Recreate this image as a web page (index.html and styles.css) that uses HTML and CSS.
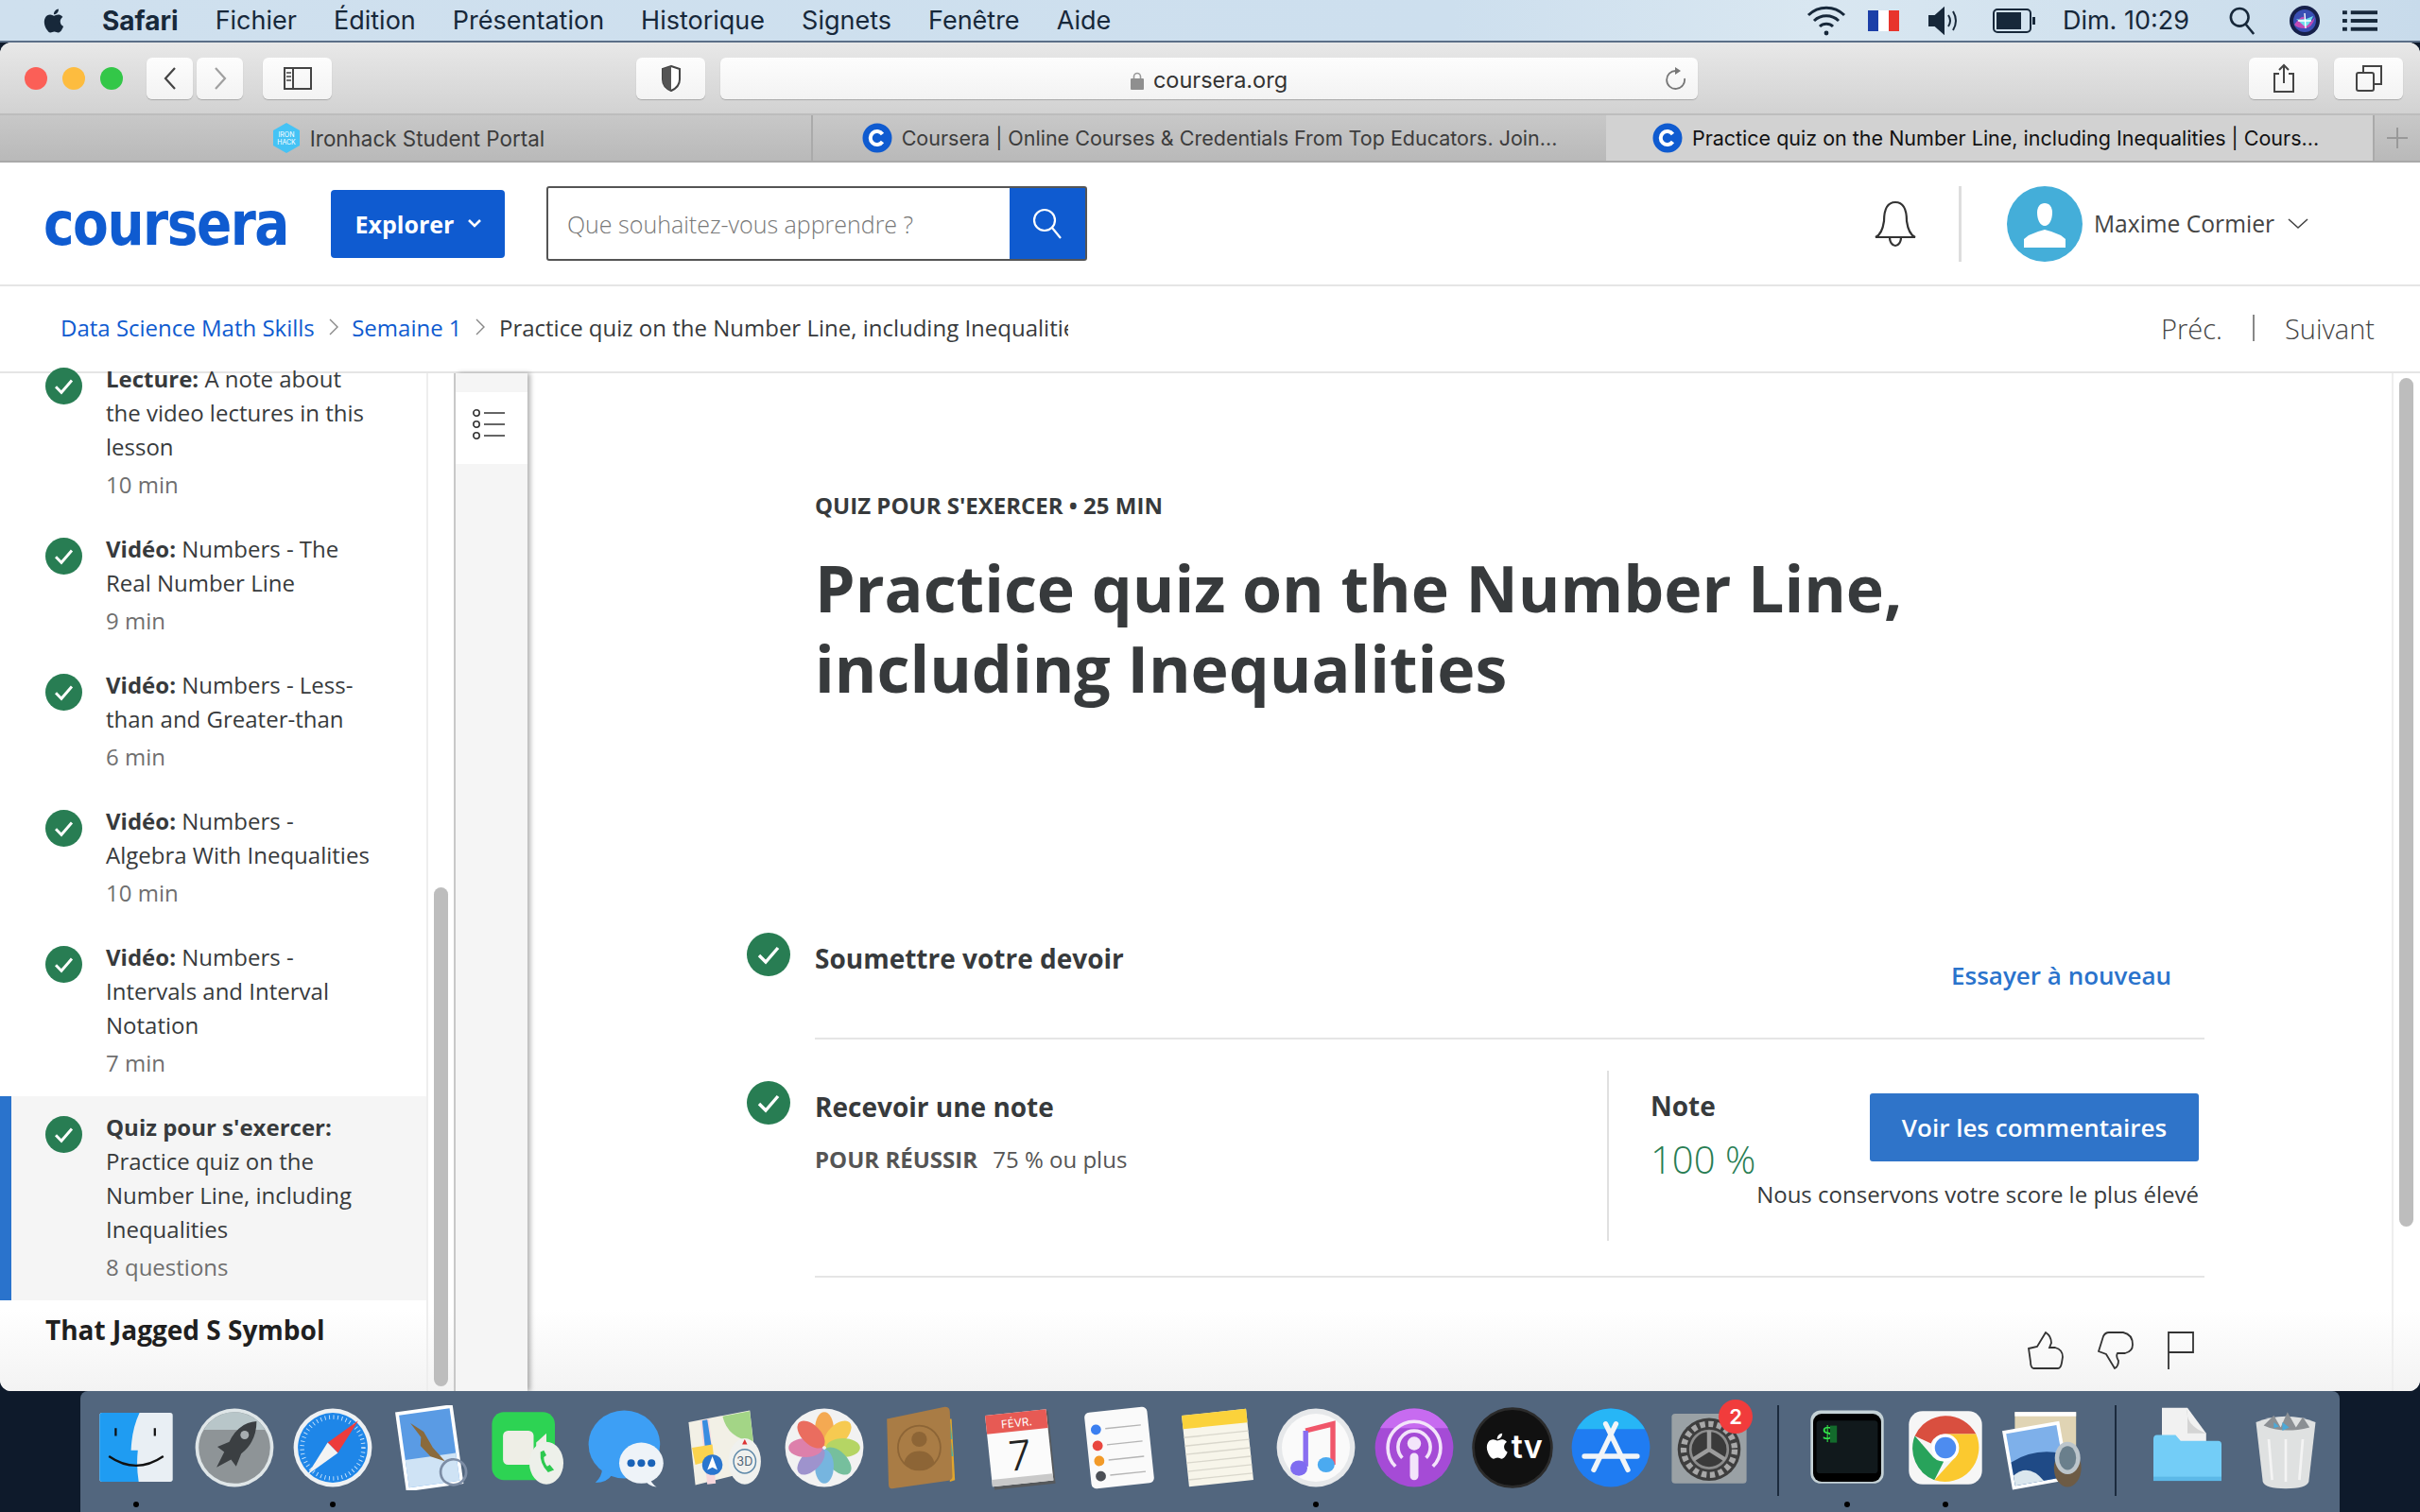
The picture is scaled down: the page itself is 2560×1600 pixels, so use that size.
FILE: index.html
```html
<!DOCTYPE html>
<html lang="fr">
<head>
    <meta charset="UTF-8">
    <meta name="viewport" content="width=device-width, initial-scale=1.0">
    <title>Practice quiz on the Number Line, including Inequalities | Coursera</title>
    <link rel="stylesheet" href="styles.css">
</head>
<body>
    <svg class="defs" width="0" height="0">
        <symbol id="apple" viewBox="0 0 24 24"><path d="M18.71 19.5c-.83 1.24-1.71 2.45-3.05 2.47-1.34.03-1.77-.79-3.29-.79-1.53 0-2 .77-3.27.82-1.31.05-2.3-1.32-3.14-2.53C4.25 17 2.94 12.45 4.7 9.39c.87-1.52 2.43-2.48 4.12-2.51 1.28-.02 2.5.87 3.29.87.78 0 2.26-1.07 3.8-.91.65.03 2.47.26 3.64 1.98-.09.06-2.17 1.28-2.15 3.81.03 3.02 2.65 4.03 2.68 4.04-.03.07-.42 1.44-1.38 2.83M13 3.5c.73-.83 1.94-1.46 2.94-1.5.13 1.17-.34 2.35-1.04 3.19-.69.85-1.83 1.51-2.95 1.42-.15-1.15.41-2.35 1.05-3.11z"/></symbol>
        <symbol id="check" viewBox="0 0 46 46"><circle cx="23" cy="23" r="23" fill="#287d53"/><path d="M13 24l7 7 13-15" fill="none" stroke="#fff" stroke-width="3.4"/></symbol>
        <symbol id="fav-c" viewBox="0 0 32 32"><circle cx="16" cy="16" r="15.5" fill="#0f5bd0"/><path d="M21.5 12a7 7 0 1 0 0 8" fill="none" stroke="#fff" stroke-width="4"/></symbol>
    </svg>

    <div class="menubar">
        <svg class="apple-logo" width="30" height="34"><use href="#apple"/></svg>
        <span class="menu-item menu-app">Safari</span>
        <span class="menu-item">Fichier</span>
        <span class="menu-item">Édition</span>
        <span class="menu-item">Présentation</span>
        <span class="menu-item">Historique</span>
        <span class="menu-item">Signets</span>
        <span class="menu-item">Fenêtre</span>
        <span class="menu-item">Aide</span>
        <div class="status">
            <svg width="42" height="36" viewBox="0 0 42 36" fill="none" stroke="#17283a" stroke-width="3"><path d="M2 12a27 27 0 0 1 38 0"/><path d="M8 18a19 19 0 0 1 26 0"/><path d="M14 24a10 10 0 0 1 14 0"/><circle cx="21" cy="31" r="2.4" fill="#17283a" stroke="none"/></svg>
            <div class="flag st-flag"><i class="flag-b"></i><i class="flag-w"></i><i class="flag-r"></i></div>
            <svg class="st-sound" width="36" height="30" viewBox="0 0 36 30" fill="none" stroke="#17283a" stroke-width="2"><path d="M1 10h6l9-8v26l-9-8H1z" fill="#17283a"/><path d="M21 9q4 6 0 12"/><path d="M26 5q6 10 0 20"/></svg>
            <svg class="st-battery" width="46" height="26" viewBox="0 0 46 26"><rect x="1" y="1" width="39" height="24" rx="4" fill="none" stroke="#17283a" stroke-width="2"/><rect x="4" y="4" width="26" height="18" fill="#17283a"/><rect x="42" y="9" width="3" height="8" fill="#17283a"/></svg>
            <span class="st-clock">Dim. 10:29</span>
            <svg class="st-search" width="28" height="32" viewBox="0 0 30 32" fill="none" stroke="#17283a" stroke-width="2.8"><circle cx="12" cy="12" r="10"/><path d="M19 20l9 11"/></svg>
            <svg class="st-siri" width="32" height="32" viewBox="0 0 32 32"><circle cx="16" cy="16" r="16" fill="#16204a"/><circle cx="16" cy="16" r="12" fill="#3a4fb5"/><path d="M5 20q11-14 11-4t11-4q-3 12-11 12T5 20" fill="#c14ab5"/><path d="M7 14q9 2 18-3-5 12-9 11" fill="#6fe0ee"/><path d="M16 8l1 16M9 16h14" stroke="#fff" stroke-width="1.4"/></svg>
            <svg class="st-list" width="37" height="22" viewBox="0 0 38 22" fill="#17283a"><rect width="5" height="4"/><rect x="9" width="29" height="4"/><rect y="9" width="5" height="4"/><rect x="9" y="9" width="29" height="4"/><rect y="18" width="5" height="4"/><rect x="9" y="18" width="29" height="4"/></svg>
        </div>
    </div>

    <div class="window">
        <div class="toolbar">
            <div class="lights"><i class="light light-r"></i><i class="light light-y"></i><i class="light light-g"></i></div>
            <div class="nav-pair">
                <div class="tool-btn tool-nav"><svg width="14" height="24" viewBox="0 0 14 24" fill="none" stroke="#444" stroke-width="2.2"><path d="M12 1L2 12l10 11"/></svg></div>
                <div class="tool-btn tool-nav"><svg width="14" height="24" viewBox="0 0 14 24" fill="none" stroke="#a0a0a0" stroke-width="2.2"><path d="M2 1l10 11L2 23"/></svg></div>
            </div>
            <div class="tool-btn tool-wide tool-side"><svg width="30" height="24" viewBox="0 0 30 24" fill="none" stroke="#444" stroke-width="2"><rect x="1" y="1" width="28" height="22"/><path d="M10 1v22"/><path d="M3 6h5M3 10h5M3 14h5" stroke-width="1.4"/></svg></div>
            <div class="tool-btn tool-wide tool-shield"><svg width="20" height="28" viewBox="0 0 20 28"><path d="M10 1l9 3v11q0 8-9 12Q1 23 1 15V4z" fill="#fff" stroke="#444" stroke-width="2"/><path d="M10 1L1 4v11q0 8 9 12z" fill="#555"/></svg></div>
            <div class="address">
                <div class="address-text">
                    <svg width="14" height="20" viewBox="0 0 14 20"><path d="M3.5 9V6a3.5 3.5 0 0 1 7 0v3" fill="none" stroke="#999" stroke-width="1.6"/><rect y="8" width="14" height="12" rx="1" fill="#8f8f8f"/></svg>
                    <span>coursera.org</span>
                </div>
                <svg class="reload" width="24" height="26" viewBox="0 0 24 26" fill="none" stroke="#777" stroke-width="1.8"><path d="M13 5a9.5 9.5 0 1 0 9 8"/><path d="M12 1l6 4-6 4z" fill="#777" stroke="none"/></svg>
            </div>
            <div class="tool-btn tool-wide tool-share"><svg width="24" height="32" viewBox="0 0 24 32" fill="none" stroke="#444" stroke-width="2"><path d="M7 11H2v19h20V11h-5"/><path d="M12 21V2M7 7l5-5 5 5"/></svg></div>
            <div class="tool-btn tool-wide"><svg width="28" height="28" viewBox="0 0 28 28" fill="none" stroke="#444" stroke-width="2"><rect x="1" y="8" width="18" height="19" rx="2"/><path d="M8 8V1h19v19h-8"/></svg></div>
        </div>

        <div class="tabbar">
            <div class="tab tab-one">
                <svg width="30" height="32" viewBox="0 0 30 32"><path d="M15 0l14 8v16l-14 8-14-8V8z" fill="#45c3f5"/><text x="15" y="15" class="fav-text">IRON</text><text x="15" y="23" class="fav-text">HACK</text></svg>
                <span>Ironhack Student Portal</span>
            </div>
            <div class="tab tab-two">
                <svg width="32" height="32"><use href="#fav-c"/></svg>
                <span>Coursera | Online Courses &amp; Credentials From Top Educators. Join...</span>
            </div>
            <div class="tab tab-active">
                <svg width="32" height="32"><use href="#fav-c"/></svg>
                <span>Practice quiz on the Number Line, including Inequalities | Cours...</span>
            </div>
            <div class="tab-plus"><svg width="24" height="24" viewBox="0 0 24 24" stroke="#999" stroke-width="2"><path d="M12 1v22M1 12h22"/></svg></div>
        </div>

        <header class="site-header">
            <span class="logo">coursera</span>
            <button type="button" class="explore-btn">Explorer <svg width="16" height="11" viewBox="0 0 16 11" fill="none" stroke="#fff" stroke-width="2.6"><path d="M2 2l6 6 6-6"/></svg></button>
            <div class="search">
                <span class="search-input">Que souhaitez-vous apprendre ?</span>
                <div class="search-btn"><svg width="32" height="34" viewBox="0 0 32 34" fill="none" stroke="#fff" stroke-width="2.2"><circle cx="13" cy="13" r="11"/><path d="M21 21l9 11"/></svg></div>
            </div>
            <div class="header-right">
                <svg class="bell" width="46" height="50" viewBox="0 0 46 50" fill="none" stroke="#333" stroke-width="2.2"><path d="M2 39q7-3 9-17 0-20 12-20t12 20q2 14 9 17z"/><path d="M2 39h42"/><path d="M17 39a6 9 0 0 0 12 0"/></svg>
                <div class="header-sep"></div>
                <svg width="80" height="80" viewBox="0 0 80 80"><circle cx="40" cy="40" r="40" fill="#44aed9"/><path d="M40 18c5 0 8 4 8 10 0 7-3 14-8 14s-8-7-8-14c0-6 3-10 8-10z" fill="#fff"/><path d="M40 46l-7 2-10 4-5 4v9h44v-9l-5-4-10-4z" fill="#fff"/></svg>
                <span class="user-name">Maxime Cormier</span>
                <svg width="22" height="12" viewBox="0 0 22 12" fill="none" stroke="#444" stroke-width="1.6"><path d="M1 1l10 9 10-9"/></svg>
            </div>
        </header>

        <nav class="crumbs">
            <a class="crumb-link">Data Science Math Skills</a>
            <svg class="crumb-arrow" width="10" height="18" viewBox="0 0 10 18" fill="none" stroke="#888" stroke-width="1.4"><path d="M1 1l8 8-8 8"/></svg>
            <a class="crumb-link">Semaine 1</a>
            <svg class="crumb-arrow" width="10" height="18" viewBox="0 0 10 18" fill="none" stroke="#888" stroke-width="1.4"><path d="M1 1l8 8-8 8"/></svg>
            <span class="crumb-current">Practice quiz on the Number Line, including Inequalities</span>
            <div class="pager"><span>Préc.</span><i class="pager-sep"></i><span>Suivant</span></div>
        </nav>

        <div class="body-row">
            <aside class="sidebar">
                <div class="lesson">
                    <svg class="lesson-check" width="39" height="39"><use href="#check"/></svg>
                    <div class="lesson-text"><b>Lecture:</b> A note about the video lectures in this lesson<div class="lesson-meta">10 min</div></div>
                </div>
                <div class="lesson">
                    <svg class="lesson-check" width="39" height="39"><use href="#check"/></svg>
                    <div class="lesson-text"><b>Vidéo:</b> Numbers - The Real Number Line<div class="lesson-meta">9 min</div></div>
                </div>
                <div class="lesson">
                    <svg class="lesson-check" width="39" height="39"><use href="#check"/></svg>
                    <div class="lesson-text"><b>Vidéo:</b> Numbers - Less-than and Greater-than<div class="lesson-meta">6 min</div></div>
                </div>
                <div class="lesson">
                    <svg class="lesson-check" width="39" height="39"><use href="#check"/></svg>
                    <div class="lesson-text"><b>Vidéo:</b> Numbers - Algebra With Inequalities<div class="lesson-meta">10 min</div></div>
                </div>
                <div class="lesson">
                    <svg class="lesson-check" width="39" height="39"><use href="#check"/></svg>
                    <div class="lesson-text"><b>Vidéo:</b> Numbers - Intervals and Interval Notation<div class="lesson-meta">7 min</div></div>
                </div>
                <div class="lesson lesson-active">
                    <svg class="lesson-check" width="39" height="39"><use href="#check"/></svg>
                    <div class="lesson-text"><b>Quiz pour s'exercer:</b> Practice quiz on the Number Line, including Inequalities<div class="lesson-meta">8 questions</div></div>
                </div>
                <h4 class="lesson-group">That Jagged S Symbol</h4>
            </aside>
            <div class="side-track"><div class="side-thumb"></div></div>
            <div class="side-rail">
                <div class="rail-tab"><svg width="36" height="32" viewBox="0 0 36 32" fill="none" stroke="#333" stroke-width="1.6"><circle cx="5" cy="4" r="3.2"/><circle cx="5" cy="16" r="3.2"/><circle cx="5" cy="28" r="3.2"/><path d="M13 4h22M13 16h22M13 28h22"/></svg></div>
            </div>

            <main class="content">
                <div class="quiz-label">QUIZ POUR S'EXERCER • 25 MIN</div>
                <h1 class="quiz-title">Practice quiz on the Number Line, including Inequalities</h1>

                <section class="step step-submit">
                    <div class="step-main">
                        <svg class="step-check" width="46" height="46"><use href="#check"/></svg>
                        <h3 class="step-title">Soumettre votre devoir</h3>
                    </div>
                    <a class="retry-link">Essayer à nouveau</a>
                </section>

                <section class="step step-grade">
                    <div class="step-main">
                        <svg class="step-check" width="46" height="46"><use href="#check"/></svg>
                        <div>
                            <h3 class="step-title">Recevoir une note</h3>
                            <p class="pass-line"><b>POUR RÉUSSIR</b> 75 % ou plus</p>
                        </div>
                    </div>
                    <div class="grade-box">
                        <div class="grade-top">
                            <div>
                                <h3 class="grade-label">Note</h3>
                                <div class="grade-score">100 %</div>
                            </div>
                            <button type="button" class="feedback-btn">Voir les commentaires</button>
                        </div>
                        <p class="grade-note">Nous conservons votre score le plus élevé</p>
                    </div>
                </section>

                <div class="reactions">
                    <svg width="38" height="40" viewBox="0 0 38 40" fill="none" stroke="#333" stroke-width="1.8"><path d="M1 18L10 16 19 1q6 4 6 11l-2 5h6q8 2 8 10l-1 6q-1 6-4 6H6q-3-1-3-7z"/></svg>
                    <svg width="38" height="40" viewBox="0 0 38 40" fill="none" stroke="#333" stroke-width="1.8"><path d="M1 21L6 5q2-4 6-4h15q10 2 10 13 0 7-8 9h-8q-2 3 1 8 0 6-4 8L9 24z"/></svg>
                    <svg width="28" height="40" viewBox="0 0 28 40" fill="none" stroke="#333" stroke-width="1.8"><path d="M1 40V1h26v21H1"/></svg>
                </div>
            </main>
            <div class="page-track"><div class="page-thumb"></div></div>
        </div>
    </div>

    <div class="dock">
        <div class="dock-item">
            <svg class="dock-icon" viewBox="0 0 100 100"><rect x="7" y="9" width="86" height="81" rx="3" fill="#e9eff4"/><path d="M10 9h44q-9 19-10 44h8q-2 18 1 37H10q-3 0-3-3V12q0-3 3-3z" fill="#1f9cf2"/><path d="M26 27v9M72 27v9" stroke="#111" stroke-width="2.5"/><path d="M18 60q32 22 64 0" fill="none" stroke="#111" stroke-width="2.5"/></svg>
            <i class="dock-dot"></i>
        </div>
        <div class="dock-item">
            <svg class="dock-icon" viewBox="0 0 100 100"><circle cx="50" cy="50" r="46" fill="#dfe6e8"/><circle cx="50" cy="50" r="42" fill="#8e9497"/><path d="M50 8a42 42 0 0 1 36 21H14A42 42 0 0 1 50 8z" fill="#b8c6c9"/><path d="M76 19q-22 2-32 24l-14 6 8 6-9 18 17-9 6 8 6-15q18-14 18-38z" fill="#3b3f42"/><circle cx="62" cy="35" r="5" fill="#a7adb0"/></svg>
        </div>
        <div class="dock-item">
            <svg class="dock-icon" viewBox="0 0 100 100"><circle cx="50" cy="50" r="46" fill="#eef1f3"/><circle cx="50" cy="50" r="41" fill="#1e86e8"/><circle cx="50" cy="50" r="36" fill="none" stroke="#cfe6fb" stroke-width="5" stroke-dasharray="1 4"/><path d="M80 18L56 56 44 44z" fill="#ed3c3c"/><path d="M20 82l24-38 12 12z" fill="#f3f3f3"/></svg>
            <i class="dock-dot"></i>
        </div>
        <div class="dock-item">
            <svg class="dock-icon" viewBox="0 0 100 100"><g transform="rotate(-8 50 50)"><rect x="14" y="3" width="68" height="94" fill="#fff"/><rect x="18" y="7" width="60" height="86" fill="#5a9be4"/><rect x="18" y="60" width="60" height="33" fill="#cfe3f5"/><path d="M30 18l14 12 8 20 12 18-16-8-10-14 2-10z" fill="#8a6a3c"/><circle cx="72" cy="82" r="15" fill="none" stroke="#7d8da5" stroke-width="3"/></g></svg>
        </div>
        <div class="dock-item">
            <svg class="dock-icon" viewBox="0 0 100 100"><rect x="6" y="8" width="74" height="80" rx="14" fill="#2dd353"/><rect x="19" y="30" width="36" height="40" rx="6" fill="#eeeee6"/><path d="M58 44l12-11v30L58 54z" fill="#eeeee6"/><ellipse cx="70" cy="68" rx="20" ry="25" fill="#edf0ea"/><path d="M63 55q-1 14 9 24l7-3-5-6-3 2q-4-5-4-11l3-2-3-6z" fill="#2dc94f"/></svg>
        </div>
        <div class="dock-item">
            <svg class="dock-icon" viewBox="0 0 100 100"><ellipse cx="46" cy="46" rx="42" ry="40" fill="#3d9ff5"/><path d="M20 74q0 10-8 17 14 0 20-10z" fill="#3d9ff5"/><ellipse cx="66" cy="68" rx="26" ry="24" fill="#eef3f8"/><path d="M76 86q2 6 8 10-10-1-14-8z" fill="#eef3f8"/><circle cx="54" cy="68" r="4.5" fill="#1a63b8"/><circle cx="66" cy="68" r="4.5" fill="#1a63b8"/><circle cx="78" cy="68" r="4.5" fill="#1a63b8"/></svg>
        </div>
        <div class="dock-item">
            <svg class="dock-icon" viewBox="0 0 100 100"><path d="M6 20L78 6l8 70-72 18z" fill="#f2f0e6"/><path d="M46 13l32-6 4 36q-30-4-36-30z" fill="#a3d586"/><path d="M20 18l10-2 8 76-10 1z" fill="#f7d7dc"/><path d="M22 18l6-1 6 38-8 1z" fill="#3b8ce0"/><path d="M10 50l24-4 2 18-22 6z" fill="#fbd34e"/><circle cx="34" cy="70" r="12" fill="#2a76cf"/><path d="M34 60l6 16-6-3-6 3z" fill="#fff"/><ellipse cx="72" cy="66" rx="19" ry="27" fill="#f0f1ee"/><ellipse cx="72" cy="66" rx="13" ry="14" fill="none" stroke="#5b87a8" stroke-width="1.6"/><text x="72" y="71" class="dock-small">3D</text><path d="M72 40l3 6h-6z" fill="#d33"/></svg>
        </div>
        <div class="dock-item">
            <svg class="dock-icon" viewBox="0 0 100 100"><circle cx="50" cy="50" r="46" fill="#f2f2f2"/><g opacity=".82"><ellipse cx="50" cy="28" rx="11" ry="20" fill="#f59a2f"/><ellipse cx="50" cy="28" rx="11" ry="20" fill="#f7c22e" transform="rotate(45 50 50)"/><ellipse cx="50" cy="28" rx="11" ry="20" fill="#a8cf45" transform="rotate(90 50 50)"/><ellipse cx="50" cy="28" rx="11" ry="20" fill="#5bb58b" transform="rotate(135 50 50)"/><ellipse cx="50" cy="28" rx="11" ry="20" fill="#5ca8dc" transform="rotate(180 50 50)"/><ellipse cx="50" cy="28" rx="11" ry="20" fill="#8c7fc6" transform="rotate(225 50 50)"/><ellipse cx="50" cy="28" rx="11" ry="20" fill="#d9689c" transform="rotate(270 50 50)"/><ellipse cx="50" cy="28" rx="11" ry="20" fill="#e9503f" transform="rotate(315 50 50)"/></g></svg>
        </div>
        <div class="dock-item">
            <svg class="dock-icon" viewBox="0 0 100 100"><path d="M84 16l4 72-6 2-2-74z" fill="#e0a52e"/><path d="M82 18l3 22-4 0zM83 40l3 20-4 0z" fill="#4bb5a5"/><path d="M8 16L76 2q6 0 6 6l3 76q0 4-6 5L14 98q-4 0-4-5z" fill="#a97c45"/><ellipse cx="46" cy="50" rx="25" ry="26" fill="none" stroke="#8d6536" stroke-width="2"/><circle cx="46" cy="40" r="9" fill="#8d6536"/><path d="M28 68q4-14 18-14t18 14q-8 8-18 8t-18-8z" fill="#8d6536"/></svg>
        </div>
        <div class="dock-item">
            <svg class="dock-icon" viewBox="0 0 100 100"><g transform="rotate(-6 50 50)"><rect x="14" y="10" width="72" height="86" fill="#56595c"/><rect x="12" y="8" width="72" height="84" fill="#fbfbfb"/><rect x="12" y="8" width="72" height="22" fill="#e75a54"/><text x="48" y="25" class="cal-month">FÉVR.</text><text x="48" y="76" class="cal-day">7</text><rect x="12" y="84" width="72" height="8" fill="#c9c9c9"/></g></svg>
        </div>
        <div class="dock-item">
            <svg class="dock-icon" viewBox="0 0 100 100"><g transform="rotate(-6 50 50)"><rect x="13" y="5" width="74" height="90" rx="6" fill="#fafafa"/><circle cx="25" cy="26" r="6" fill="#3b7ff0"/><circle cx="25" cy="45" r="6" fill="#e9463e"/><circle cx="25" cy="63" r="6" fill="#f29a28"/><circle cx="25" cy="81" r="6" fill="#4b4f55"/><path d="M36 26h42M36 45h42M36 63h42M36 81h42" stroke="#b5b5b5" stroke-width="1.6"/></g></svg>
        </div>
        <div class="dock-item">
            <svg class="dock-icon" viewBox="0 0 100 100"><g transform="rotate(-6 50 50)"><rect x="12" y="8" width="76" height="84" fill="#f7f5ea"/><rect x="12" y="8" width="76" height="16" fill="#fbd23b"/><path d="M12 34h76M12 44h76M12 54h76M12 64h76M12 74h76M12 84h76" stroke="#d9d7cc" stroke-width="1.5"/></g></svg>
        </div>
        <div class="dock-item">
            <svg class="dock-icon" viewBox="0 0 100 100"><circle cx="50" cy="50" r="46" fill="#e6e8ea"/><circle cx="50" cy="50" r="40" fill="#fafafa"/><path d="M38 30l32-8v48" fill="none" stroke="#f0566a" stroke-width="6"/><path d="M38 30v42" fill="none" stroke="#8a6ef0" stroke-width="6"/><ellipse cx="30" cy="74" rx="10" ry="9" fill="#7f6cf0"/><ellipse cx="62" cy="70" rx="10" ry="9" fill="#4baaf0"/></svg>
            <i class="dock-dot"></i>
        </div>
        <div class="dock-item">
            <svg class="dock-icon" viewBox="0 0 100 100"><circle cx="50" cy="50" r="46" fill="#a54bd6"/><path d="M50 4a46 46 0 0 1 40 23H10A46 46 0 0 1 50 4z" fill="#c76bf0"/><g fill="none" stroke="#f3e4fa" stroke-width="4"><path d="M28 72a31 31 0 1 1 44 0"/><path d="M36 62a19 19 0 1 1 28 0"/></g><circle cx="50" cy="45" r="8" fill="#f3e4fa"/><rect x="45" y="56" width="10" height="32" rx="5" fill="#f3e4fa"/></svg>
        </div>
        <div class="dock-item">
            <svg class="dock-icon" viewBox="0 0 100 100"><circle cx="50" cy="50" r="46" fill="#111"/><circle cx="50" cy="50" r="46" fill="none" stroke="#2b2b2b" stroke-width="3"/><svg x="14" y="30" width="36" height="36" fill="#fff"><use href="#apple"/></svg><text x="67" y="62" class="tv-text">tv</text></svg>
        </div>
        <div class="dock-item">
            <svg class="dock-icon" viewBox="0 0 100 100"><circle cx="50" cy="50" r="46" fill="#1f7cf2"/><path d="M50 4a46 46 0 0 1 40 24H10A46 46 0 0 1 50 4z" fill="#27b6f6"/><g stroke="#f1f5f8" stroke-width="6" stroke-linecap="round"><path d="M56 22L30 76"/><path d="M44 22l26 54"/><path d="M19 60h62"/></g></svg>
        </div>
        <div class="dock-item">
            <svg class="dock-icon" viewBox="0 0 100 100"><rect x="6" y="10" width="88" height="82" rx="4" fill="#9aa1a5"/><circle cx="50" cy="52" r="37" fill="#3e3e3e"/><circle cx="50" cy="52" r="30" fill="none" stroke="#a8a8a8" stroke-width="7" stroke-dasharray="6 4"/><circle cx="50" cy="52" r="22" fill="#3a3a3a" stroke="#8b8b8b" stroke-width="3"/><path d="M50 52V30M50 52L31 64M50 52l19 12" stroke="#9c9c9c" stroke-width="5"/></svg>
            <span class="dock-badge">2</span>
        </div>
        <div class="dock-sep"></div>
        <div class="dock-item">
            <svg class="dock-icon" viewBox="0 0 100 100"><rect x="7" y="6" width="86" height="86" rx="12" fill="#c5d2d6"/><rect x="10" y="10" width="80" height="80" rx="10" fill="#000"/><rect x="14" y="18" width="72" height="62" rx="4" fill="#11191c"/><text x="20" y="40" class="term-text">$</text><rect x="30" y="24" width="8" height="20" fill="#136b2c"/></svg>
            <i class="dock-dot"></i>
        </div>
        <div class="dock-item">
            <svg class="dock-icon" viewBox="0 0 100 100"><rect x="7" y="7" width="86" height="86" rx="16" fill="#f6f6f6"/><path d="M14 36a40 40 0 0 1 72-2H50a17 17 0 0 0-17 11z" fill="#d94f3f"/><path d="M14 36l19 22a18 18 0 0 0 15 8L37 88A40 40 0 0 1 14 36z" fill="#28a35b"/><path d="M86 34a40 40 0 0 1-49 54l21-23a17 17 0 0 0-8-31z" fill="#fbc92f"/><circle cx="50" cy="50" r="16" fill="#fff"/><circle cx="50" cy="50" r="12.5" fill="#4d8cf0"/></svg>
            <i class="dock-dot"></i>
        </div>
        <div class="dock-item">
            <svg class="dock-icon" viewBox="0 0 100 100"><rect x="16" y="8" width="72" height="78" fill="#e0d4b4"/><rect x="16" y="8" width="72" height="5" fill="#fff"/><g transform="rotate(-10 40 55)"><rect x="6" y="24" width="68" height="70" fill="#fff"/><rect x="10" y="28" width="60" height="62" fill="#7eb0ea"/><path d="M10 62q30-12 60 0v28H10z" fill="#1f4a86"/><path d="M10 78q20-12 34 12H10z" fill="#dbe7ee"/></g><ellipse cx="78" cy="74" rx="16" ry="22" fill="#6d5b45"/><ellipse cx="78" cy="62" rx="15" ry="19" fill="#bcc5cb"/><ellipse cx="78" cy="62" rx="10" ry="14" fill="#6a7f8c"/></svg>
        </div>
        <div class="dock-sep dock-sep-wide"></div>
        <div class="dock-item">
            <svg class="dock-icon" viewBox="0 0 100 100"><path d="M20 3h30l22 30v30H20z" fill="#f1f1f1"/><path d="M50 3q-4 20 22 30H50z" fill="#d4d4d4"/><path d="M10 40q0-5 4-5h22l6 7h44q4 0 4 4v42H10z" fill="#73cdf7"/><rect x="10" y="84" width="80" height="5" fill="#5cb9e8"/></svg>
        </div>
        <div class="dock-item">
            <svg class="dock-icon" viewBox="0 0 100 100"><path d="M15 20q35-14 70 0l-8 70q-3 8-27 8t-27-8z" fill="#dfe1e1"/><path d="M24 24l12-12 8 14 8-18 10 18 8-12 8 12q-32 8-54-2z" fill="#8b8f93"/><path d="M46 20l8 6-8 4zM36 20l6 5-6 2z" fill="#4aa9d8"/><path d="M30 40l4 48M50 40v50M70 40l-4 48" stroke="#f4f4f4" stroke-width="3"/></svg>
        </div>
    </div>
</body>
</html>
```

FILE: styles.css
```css
* {
    box-sizing: border-box;
}
html, body {
    margin: 0;
    height: 1600px;
    overflow: hidden;
}
body {
    width: 2560px;
    background: #0e1a2b;
    font-family: "Open Sans", sans-serif;
    color: #373a3c;
    display: flex;
    flex-direction: column;
}
.defs {
    position: absolute;
}
h1, h3, h4, p {
    margin: 0;
}

/* menu bar */
.menubar {
    height: 45px;
    flex: none;
    display: flex;
    align-items: center;
    padding: 0 45px 0 42px;
    background: linear-gradient(to right, #cfe0ee, #cddfee 60%, #d9e7f1 75%, #c8dbeb);
    border-bottom: 2px solid #5b6f88;
    font-family: Inter, sans-serif;
    font-size: 27px;
    color: #17283a;
}
.apple-logo {
    fill: #17283a;
    margin-right: 36px;
}
.menu-item {
    margin-right: 39px;
}
.menu-app {
    font-size: 28px;
    font-weight: 700;
}
.status {
    margin-left: auto;
    display: flex;
    align-items: center;
}
.flag {
    width: 33px;
    height: 22px;
    display: flex;
}
.flag i {
    flex: 1;
}
.flag-b { background: #1c3fa8; }
.flag-w { background: #fff; }
.flag-r { background: #e8342c; }
.st-flag { margin-left: 23px; }
.st-sound { margin-left: 31px; }
.st-battery { margin-left: 32px; }
.st-clock { margin-left: 28px; }
.st-search { margin-left: 42px; }
.st-siri { margin-left: 36px; }
.st-list { margin-left: 24px; }

/* safari window */
.window {
    height: 1427px;
    flex: none;
    display: flex;
    flex-direction: column;
    background: #fff;
    border-radius: 12px;
    overflow: hidden;
}
.toolbar {
    height: 75px;
    flex: none;
    display: flex;
    align-items: center;
    padding: 0 16px 0 26px;
    background: linear-gradient(#e8e8e8, #d2d2d2);
    font-family: Inter, sans-serif;
}
.lights {
    display: flex;
    gap: 16px;
    margin-right: 25px;
}
.light {
    width: 24px;
    height: 24px;
    border-radius: 50%;
}
.light-r { background: #fb5f57; }
.light-y { background: #fdbc3f; }
.light-g { background: #33c748; }
.tool-btn {
    height: 44px;
    display: flex;
    align-items: center;
    justify-content: center;
    background: linear-gradient(#fdfdfd, #f3f3f3);
    border-radius: 6px;
    box-shadow: 0 1px 1px #a8a8a8;
}
.nav-pair {
    display: flex;
    gap: 4px;
    margin-right: 21px;
}
.tool-nav {
    width: 49px;
}
.tool-wide {
    width: 73px;
}
.tool-side {
    margin-right: 322px;
}
.tool-shield {
    margin-right: 16px;
}
.address {
    width: 1034px;
    height: 44px;
    margin-right: 583px;
    padding-top: 4px;
    position: relative;
    display: flex;
    align-items: center;
    justify-content: center;
    background: linear-gradient(#fdfdfd, #f3f3f3);
    border-radius: 6px;
    box-shadow: 0 1px 1px #a8a8a8;
    font-size: 23.5px;
    color: #333;
}
.address-text {
    display: flex;
    align-items: center;
    gap: 10px;
}
.reload {
    position: absolute;
    right: 12px;
    top: 9px;
}
.tool-share {
    margin-right: 17px;
}

/* tabs */
.tabbar {
    height: 52px;
    flex: none;
    display: flex;
    background: linear-gradient(#c8c8c8, #b9b9b9);
    border-top: 2px solid #bdbdbd;
    border-bottom: 2px solid #a9a9a9;
    font-family: Inter, sans-serif;
    font-size: 21.5px;
    color: #3c3c3c;
}
.tab {
    display: flex;
    align-items: center;
    justify-content: center;
    gap: 10px;
    white-space: nowrap;
}
.tab-one {
    width: 860px;
    padding-left: 6px;
    border-right: 2px solid #aaa;
    font-size: 22.4px;
}
.tab-two {
    width: 839px;
}
.tab-active {
    width: 811px;
    padding-right: 8px;
    background: #d2d2d2;
    color: #111;
}
.tab-plus {
    width: 50px;
    display: flex;
    align-items: center;
    justify-content: center;
    border-left: 2px solid #aaa;
}
.fav-text {
    font-size: 7px;
    fill: #fff;
    text-anchor: middle;
}

/* coursera header */
.site-header {
    height: 131px;
    flex: none;
    display: flex;
    align-items: center;
    padding: 0 0 0 46px;
    border-bottom: 2px solid #e5e5e5;
}
.logo {
    width: 304px;
    font-family: "DejaVu Sans", sans-serif;
    font-size: 55px;
    font-weight: 700;
    letter-spacing: -1.5px;
    color: #0f5bd0;
    transform: scaleY(1.15);
}
.explore-btn {
    width: 184px;
    height: 72px;
    padding-left: 8px;
    display: flex;
    align-items: center;
    justify-content: center;
    gap: 14px;
    border: 0;
    border-radius: 4px;
    background: #0f5bd0;
    color: #fff;
    font-family: "Open Sans", sans-serif;
    font-size: 25px;
    font-weight: 700;
}
.search {
    width: 572px;
    height: 79px;
    margin-left: 44px;
    display: flex;
    border: 2px solid #555;
    border-radius: 3px;
}
.search-input {
    flex: 1;
    display: flex;
    align-items: center;
    padding-left: 20px;
    font-size: 25px;
    font-weight: 300;
    color: #777;
}
.search-btn {
    width: 80px;
    display: flex;
    align-items: center;
    justify-content: center;
    background: #0f5bd0;
}
.header-right {
    margin-left: auto;
    padding-right: 118px;
    display: flex;
    align-items: center;
}
.bell {
    margin-right: 44px;
}
.header-sep {
    width: 3px;
    height: 80px;
    margin-right: 48px;
    background: #ddd;
}
.user-name {
    margin: 0 14px 0 12px;
    font-size: 24.6px;
    color: #444;
}

/* breadcrumb */
.crumbs {
    height: 92px;
    flex: none;
    display: flex;
    align-items: center;
    padding: 0 48px 4px 64px;
    border-bottom: 2px solid #e5e5e5;
    font-size: 24px;
}
.crumb-link {
    color: #0f5bd0;
}
.crumb-arrow {
    margin: 0 14.7px;
}
.crumb-current {
    width: 602px;
    overflow: hidden;
    white-space: nowrap;
}
.pager {
    margin-left: auto;
    margin-top: 2px;
    display: flex;
    align-items: center;
    font-size: 29px;
    font-weight: 300;
    color: #444;
}
.pager-sep {
    width: 2px;
    height: 28px;
    margin: 0 32px;
    background: #888;
}

/* main row */
.body-row {
    flex: 1;
    min-height: 0;
    display: flex;
    background: linear-gradient(#fff 92%, #f3f3f3);
}
.sidebar {
    width: 451px;
    flex: none;
    margin-top: -27px;
    font-size: 24px;
    line-height: 36px;
}
.lesson {
    display: flex;
    align-items: flex-start;
    gap: 25px;
    padding: 15px 30px 17px 48px;
}
.lesson-check {
    flex: none;
    margin-top: 6px;
}
.lesson-text {
    width: 285px;
    color: #373a3c;
}
.lesson-meta {
    margin-top: 4px;
    color: #6f6f6f;
}
.lesson-active {
    padding-left: 36px;
    border-left: 12px solid #2a73cc;
    background: #f5f5f5;
}
.lesson-group {
    margin: 13px 0 0 48px;
    font-size: 28px;
    line-height: 36px;
    font-weight: 700;
    color: #1f1f1f;
}
.side-track {
    width: 31px;
    flex: none;
    padding: 544px 6px 6px;
    border-left: 2px solid #eee;
    border-right: 2px solid #ccc;
}
.side-thumb {
    height: 528px;
    background: #bdbdbd;
    border-radius: 9px;
}
.side-rail {
    width: 76px;
    flex: none;
    position: relative;
    padding-top: 20px;
    background: #f5f5f5;
    box-shadow: 3px 0 5px rgba(0, 0, 0, 0.3);
}
.rail-tab {
    height: 76px;
    padding: 18px 0 0 17px;
    background: #fff;
}

/* quiz content */
.content {
    flex: 1;
    padding: 125px 198px 0 304px;
}
.quiz-label {
    font-size: 24px;
    line-height: 30px;
    font-weight: 700;
    color: #373a3c;
}
.quiz-title {
    margin-top: 29px;
    width: 1200px;
    font-size: 68px;
    line-height: 85px;
    font-weight: 700;
    color: #373a3c;
}
.step {
    display: flex;
    border-bottom: 2px solid #e5e5e5;
}
.step-main {
    flex: 1;
    display: flex;
    align-items: flex-start;
    gap: 26px;
    margin-left: -72px;
}
.step-check {
    flex: none;
}
.step-title {
    padding-top: 9px;
    font-size: 28px;
    line-height: 36px;
    font-weight: 700;
}
.step-submit {
    margin-top: 238px;
    height: 113px;
    justify-content: space-between;
}
.retry-link {
    margin-top: 27px;
    padding-right: 35px;
    font-size: 26px;
    line-height: 36px;
    font-weight: 600;
    color: #2a73cc;
}
.step-grade {
    height: 252px;
    padding-top: 44px;
}
.pass-line {
    margin-top: 20px;
    font-size: 24px;
    line-height: 36px;
    color: #555;
}
.pass-line b {
    font-weight: 700;
    margin-right: 10px;
}
.grade-box {
    width: 632px;
    height: 180px;
    flex: none;
    margin-top: -11px;
    padding: 19px 6px 0 44px;
    border-left: 2px solid #e0e0e0;
}
.grade-top {
    height: 77px;
    display: flex;
    justify-content: space-between;
}
.grade-label {
    font-size: 28px;
    line-height: 36px;
    font-weight: 700;
}
.grade-score {
    margin-top: 14px;
    font-size: 40px;
    line-height: 50px;
    font-weight: 300;
    color: #287d53;
}
.feedback-btn {
    width: 348px;
    height: 72px;
    margin-top: 5px;
    border: 0;
    border-radius: 3px;
    background: #2f74c9;
    color: #fff;
    font-family: "Open Sans", sans-serif;
    font-size: 26px;
    font-weight: 600;
}
.grade-note {
    margin-top: 17px;
    text-align: right;
    font-size: 24px;
    line-height: 36px;
}
.reactions {
    display: flex;
    justify-content: flex-end;
    gap: 36px;
    margin-top: 57px;
    padding-right: 11px;
}
.page-track {
    width: 30px;
    flex: none;
    padding: 5px 7px 0 6px;
    border-left: 2px solid #eee;
}
.page-thumb {
    height: 898px;
    background: #bdbdbd;
    border-radius: 8px;
}

/* dock */
.dock {
    width: 2390px;
    height: 128px;
    margin: 0 auto;
    display: flex;
    padding-left: 7px;
    background: #52667e;
    border-radius: 8px 8px 0 0;
    font-family: Inter, sans-serif;
}
.dock-item {
    width: 104px;
    flex: none;
    position: relative;
    display: flex;
    flex-direction: column;
    align-items: center;
    padding-top: 15px;
}
.dock-icon {
    width: 90px;
    height: 90px;
}
.dock-dot {
    width: 6px;
    height: 6px;
    margin-top: 12px;
    border-radius: 50%;
    background: #000;
}
.dock-sep {
    width: 42px;
    flex: none;
    position: relative;
}
.dock-sep::after {
    content: "";
    display: block;
    width: 2px;
    height: 96px;
    margin: 15px auto 0;
    background: #1b2a3d;
}
.dock-sep-wide {
    width: 48px;
}
.dock-badge {
    position: absolute;
    top: 9px;
    right: 6px;
    width: 36px;
    height: 36px;
    display: flex;
    align-items: center;
    justify-content: center;
    border-radius: 50%;
    background: #f13c3c;
    color: #fff;
    font-size: 22px;
    font-weight: 600;
}
.cal-month {
    font-size: 13px;
    fill: #fff;
    text-anchor: middle;
}
.cal-day {
    font-size: 48px;
    fill: #222;
    text-anchor: middle;
    font-weight: 300;
}
.dock-small {
    font-size: 14px;
    fill: #4c6276;
    text-anchor: middle;
}
.tv-text {
    font-size: 38px;
    font-weight: 600;
    fill: #fff;
    text-anchor: middle;
}
.term-text {
    font-family: "DejaVu Sans Mono", monospace;
    font-size: 22px;
    fill: #35e34b;
}
```
